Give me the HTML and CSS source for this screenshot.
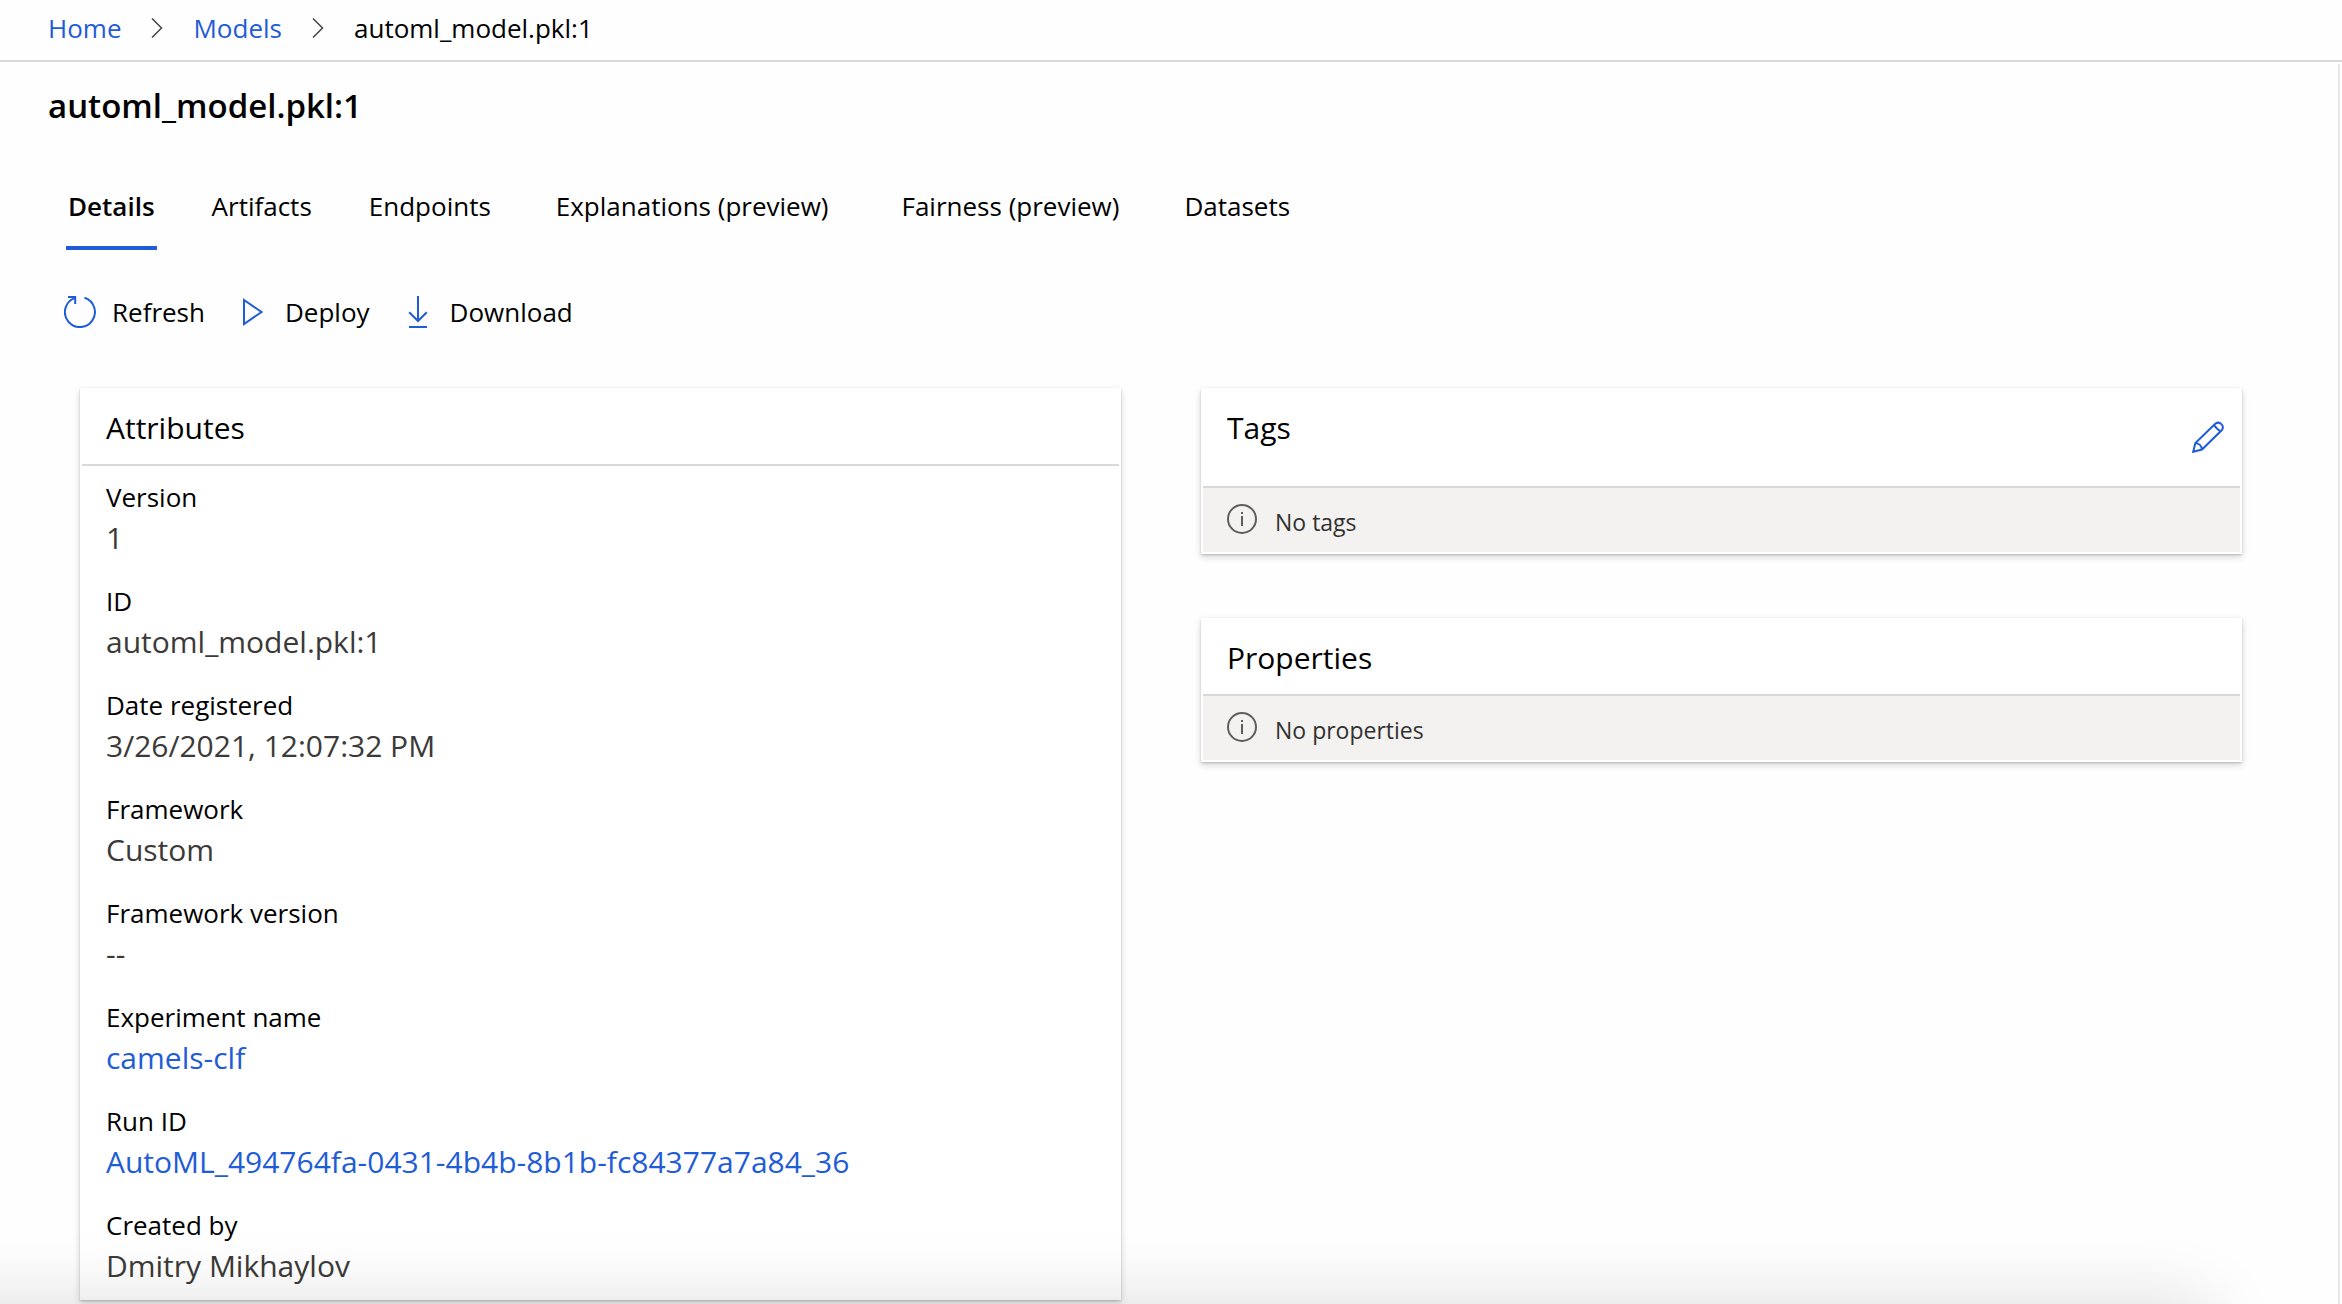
FILE: index.html
```html
<!DOCTYPE html>
<html lang="en">
<head>
<meta charset="utf-8">
<meta name="viewport" content="width=device-width, initial-scale=1">
<title>automl_model.pkl:1</title>
<link rel="stylesheet" href="styles.css">
</head>
<body>
<nav class="breadcrumb" aria-label="Breadcrumb">
  <a class="link" href="#home">Home</a>
  <svg class="chevron" viewBox="0 0 12 20" aria-hidden="true"><path d="M1 0.5 10.5 10 1 19.5"/></svg>
  <a class="link" href="#models">Models</a>
  <svg class="chevron" viewBox="0 0 12 20" aria-hidden="true"><path d="M1 0.5 10.5 10 1 19.5"/></svg>
  <span aria-current="page">automl_model.pkl:1</span>
</nav>

<main class="page">
  <h1 class="page-title">automl_model.pkl:1</h1>

  <div class="tabs" role="tablist">
    <button class="tab tab-selected" role="tab" aria-selected="true">Details</button>
    <button class="tab" role="tab">Artifacts</button>
    <button class="tab" role="tab">Endpoints</button>
    <button class="tab tab-wide" role="tab">Explanations (preview)</button>
    <button class="tab tab-wide" role="tab">Fairness (preview)</button>
    <button class="tab" role="tab">Datasets</button>
  </div>

  <div class="toolbar">
    <button class="command">
      <svg class="icon" viewBox="0 0 32 32" aria-hidden="true"><path d="M20.5 1.8A15 15 0 1 1 10.5 2.1M4 1h7.2v7"/></svg>
      <span>Refresh</span>
    </button>
    <button class="command">
      <svg class="icon icon-play" viewBox="0 0 20 32" aria-hidden="true"><path d="M1 4 18.5 16 1 28z"/></svg>
      <span>Deploy</span>
    </button>
    <button class="command">
      <svg class="icon icon-download" viewBox="0 0 20 32" aria-hidden="true"><path d="M10 0v25M1.2 16.2 10 25l8.8-8.8M1 31h18"/></svg>
      <span>Download</span>
    </button>
  </div>

  <div class="columns">
    <section class="card">
      <header class="card-header"><h2 class="card-title">Attributes</h2></header>
      <dl class="attributes">
        <div class="attribute"><dt>Version</dt><dd>1</dd></div>
        <div class="attribute"><dt>ID</dt><dd>automl_model.pkl:1</dd></div>
        <div class="attribute"><dt>Date registered</dt><dd>3/26/2021, 12:07:32 PM</dd></div>
        <div class="attribute"><dt>Framework</dt><dd>Custom</dd></div>
        <div class="attribute"><dt>Framework version</dt><dd>--</dd></div>
        <div class="attribute"><dt>Experiment name</dt><dd><a class="link" href="#experiment">camels-clf</a></dd></div>
        <div class="attribute"><dt>Run ID</dt><dd><a class="link" href="#run">AutoML_494764fa-0431-4b4b-8b1b-fc84377a7a84_36</a></dd></div>
        <div class="attribute"><dt>Created by</dt><dd>Dmitry Mikhaylov</dd></div>
      </dl>
    </section>

    <div class="side">
      <section class="card">
        <header class="card-header card-header-editable">
          <h2 class="card-title">Tags</h2>
          <button class="edit" aria-label="Edit tags">
            <svg class="icon" viewBox="0 0 32 32" aria-hidden="true"><path d="M1.2 30.8 3.4 22 23.5 2.6a4.6 4.6 0 0 1 6.4 6.4L10 28.5zM3.4 22C6.8 22.2 9.6 25 10 28.5M22 4.2C24 7 25.5 8.5 28.3 10.3"/></svg>
          </button>
        </header>
        <p class="notice">
          <svg class="info" viewBox="0 0 30 30" aria-hidden="true"><circle cx="15" cy="15" r="14"/><path d="M15 12v10M15 8v2"/></svg>
          <span>No tags</span>
        </p>
      </section>
      <section class="card">
        <header class="card-header"><h2 class="card-title">Properties</h2></header>
        <p class="notice">
          <svg class="info" viewBox="0 0 30 30" aria-hidden="true"><circle cx="15" cy="15" r="14"/><path d="M15 12v10M15 8v2"/></svg>
          <span>No properties</span>
        </p>
      </section>
    </div>
  </div>
</main>
<div class="bottom-shade" aria-hidden="true"></div>
</body>
</html>
```
FILE: styles.css
```css
:root {
  --blue: #1f5cd7;
  --line: #d9d9d9;
  --value: #3b3a39;
}

* {
  box-sizing: border-box;
}

body {
  margin: 0;
  min-height: 100vh;
  display: flex;
  flex-direction: column;
  background: #fefefe;
  color: #000;
  font-family: "Open Sans", "Noto Sans", sans-serif;
  font-size: 26px;
  line-height: 36px;
}

button {
  padding: 0;
  border: 0;
  background: none;
  color: inherit;
  font: inherit;
  cursor: pointer;
}

h1, h2, p, dl, dd {
  margin: 0;
}

.link {
  color: var(--blue);
  text-decoration: none;
}

svg {
  display: block;
  flex: none;
  fill: none;
}

.breadcrumb {
  display: flex;
  align-items: center;
  gap: 30px;
  height: 62px;
  padding: 0 48px 4px;
  border-bottom: 2px solid var(--line);
}

.chevron {
  width: 12px;
  height: 20px;
  stroke: #444;
  stroke-width: 1.5;
}

.page {
  flex: 1;
  margin-top: 2px;
  margin-right: 2px;
  border-right: 2px solid #e6e6e6;
}

.page-title {
  padding: 18px 48px 0;
  font-size: 33px;
  line-height: 48px;
  font-weight: 600;
}

.tabs {
  display: flex;
  gap: 53px;
  margin-top: 44px;
  padding: 0 66px;
}

.tab {
  height: 76px;
  padding: 0 2px 8px;
  border-bottom: 4px solid transparent;
}

.tab-wide {
  padding: 0 10px 8px;
}

.tab-selected {
  border-bottom-color: var(--blue);
  font-weight: 600;
}

.toolbar {
  display: flex;
  gap: 38px;
  padding: 44px 64px 0;
}

.command {
  display: flex;
  align-items: center;
  gap: 16px;
  height: 36px;
}

.icon {
  width: 32px;
  height: 32px;
  stroke: var(--blue);
  stroke-width: 2;
}

.icon-play,
.icon-download {
  width: 20px;
  margin-right: 6px;
}

.columns {
  display: grid;
  grid-template-columns: 1fr 1fr;
  gap: 80px;
  align-items: start;
  padding: 58px 96px 4px 80px;
}

.side {
  display: grid;
  gap: 64px;
}

.card {
  padding: 2px;
  background: #fff;
  box-shadow: 0 3px 7px rgba(0, 0, 0, 0.16), 0 1px 2px rgba(0, 0, 0, 0.18);
}

.card-header {
  display: flex;
  justify-content: space-between;
  padding: 17px 16px 15px 24px;
  border-bottom: 2px solid var(--line);
}

.card-header-editable {
  padding-bottom: 15px;
}

.card-title {
  font-size: 30px;
  line-height: 42px;
  font-weight: 400;
}

.edit {
  display: flex;
  align-items: center;
  height: 64px;
  padding-bottom: 4px;
}

.attributes {
  display: grid;
  gap: 22px;
  padding: 12px 24px 10px;
}

.attribute dt {
  line-height: 38px;
}

.attribute dd {
  color: var(--value);
  font-size: 30px;
  line-height: 44px;
}

.notice {
  display: flex;
  gap: 18px;
  height: 64px;
  padding: 16px 24px;
  background: #f3f2f1;
  color: #323130;
  font-size: 23px;
}

.info {
  width: 30px;
  height: 30px;
  stroke: #605e5c;
  stroke-width: 2;
}

/* Soft shade cast by the panel docked under the window */
.bottom-shade {
  position: fixed;
  top: 100%;
  left: -80px;
  right: 136px;
  height: 100px;
  box-shadow: 0 0 76px rgba(0, 0, 0, 0.14);
  pointer-events: none;
}
```
